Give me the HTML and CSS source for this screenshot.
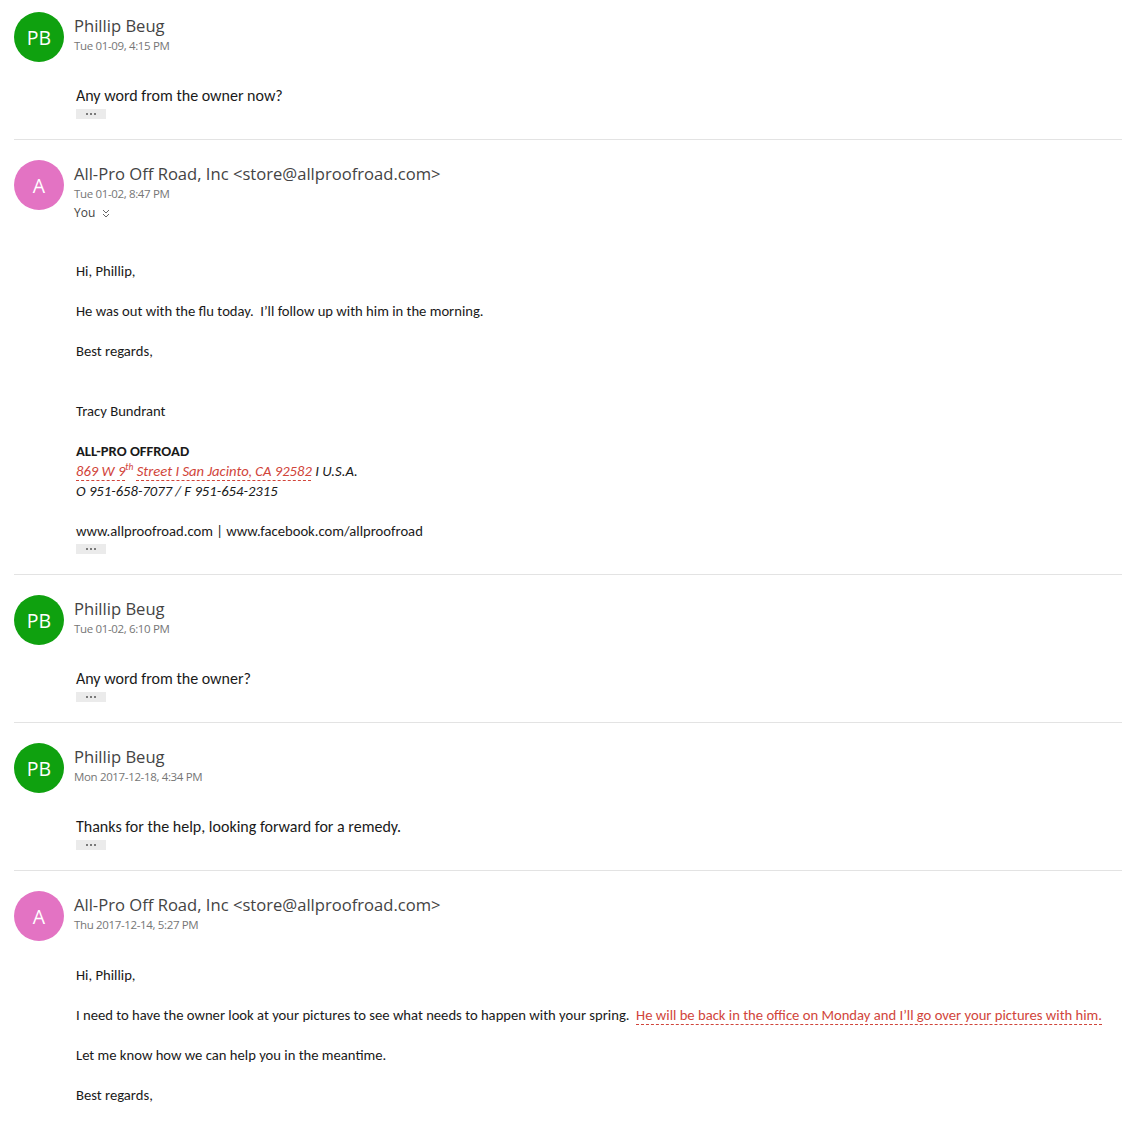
FILE: index.html
```html
<!DOCTYPE html>
<html lang="en">
<head>
<meta charset="utf-8">
<title>Conversation</title>
<link rel="stylesheet" href="styles.css">
</head>
<body>
<div class="thread">

  <div class="msg first">
    <div class="head">
      <div class="avatar green">PB</div>
      <div class="meta">
        <div class="name">Phillip Beug</div>
        <div class="date">Tue 01-09, 4:15 PM</div>
      </div>
    </div>
    <div class="body short">
      <p>Any word from the owner now?</p>
    </div>
    <div class="more"><span></span><span></span><span></span></div>
  </div>

  <div class="msg">
    <div class="head">
      <div class="avatar pink">A</div>
      <div class="meta">
        <div class="name">All-Pro Off Road, Inc &lt;store@allproofroad.com&gt;</div>
        <div class="date">Tue 01-02, 8:47 PM</div>
        <div class="to">You
          <svg class="chev" width="8" height="9" viewBox="0 0 8 9"><polyline points="1,1 4,4 7,1" fill="none" stroke="#666" stroke-width="1"/><polyline points="1,5 4,8 7,5" fill="none" stroke="#666" stroke-width="1"/></svg>
        </div>
      </div>
    </div>
    <div class="body long with-to">
      <p>Hi, Phillip,</p>
      <p class="blank">&nbsp;</p>
      <p>He was out with the flu today.&nbsp; I’ll follow up with him in the morning.</p>
      <p class="blank">&nbsp;</p>
      <p>Best regards,</p>
      <p class="blank">&nbsp;</p>
      <p class="blank">&nbsp;</p>
      <p>Tracy Bundrant</p>
      <p class="blank">&nbsp;</p>
      <p class="bold">ALL-PRO OFFROAD</p>
      <p class="ital"><span class="redlink">869 W 9</span><sup class="red">th</sup> <span class="redlink">Street I San Jacinto, CA 92582</span> I U.S.A.</p>
      <p class="ital">O 951-658-7077 / F 951-654-2315</p>
      <p class="blank">&nbsp;</p>
      <p>www.allproofroad.com | www.facebook.com/allproofroad</p>
    </div>
    <div class="more"><span></span><span></span><span></span></div>
  </div>

  <div class="msg">
    <div class="head">
      <div class="avatar green">PB</div>
      <div class="meta">
        <div class="name">Phillip Beug</div>
        <div class="date">Tue 01-02, 6:10 PM</div>
      </div>
    </div>
    <div class="body short">
      <p>Any word from the owner?</p>
    </div>
    <div class="more"><span></span><span></span><span></span></div>
  </div>

  <div class="msg">
    <div class="head">
      <div class="avatar green">PB</div>
      <div class="meta">
        <div class="name">Phillip Beug</div>
        <div class="date">Mon 2017-12-18, 4:34 PM</div>
      </div>
    </div>
    <div class="body short">
      <p>Thanks for the help, looking forward for a remedy.</p>
    </div>
    <div class="more"><span></span><span></span><span></span></div>
  </div>

  <div class="msg last">
    <div class="head">
      <div class="avatar pink">A</div>
      <div class="meta">
        <div class="name">All-Pro Off Road, Inc &lt;store@allproofroad.com&gt;</div>
        <div class="date">Thu 2017-12-14, 5:27 PM</div>
      </div>
    </div>
    <div class="body long">
      <p>Hi, Phillip,</p>
      <p class="blank">&nbsp;</p>
      <p>I need to have the owner look at your pictures to see what needs to happen with your spring.&nbsp; <span class="redlink">He will be back in the office on Monday and I’ll go over your pictures with him.</span></p>
      <p class="blank">&nbsp;</p>
      <p>Let me know how we can help you in the meantime.</p>
      <p class="blank">&nbsp;</p>
      <p>Best regards,</p>
    </div>
  </div>

</div>
</body>
</html>
```

FILE: styles.css
```css
html, body {
  margin: 0;
  padding: 0;
  background: #ffffff;
}

.thread {
  padding-left: 14px;
}

.msg {
  padding: 20px 0 20px 0;
  border-bottom: 1px solid #e3e3e3;
}

.msg.first {
  padding-top: 12px;
}

.msg.last {
  border-bottom: none;
}

.head {
  display: flex;
  align-items: flex-start;
  gap: 10px;
}

.avatar {
  width: 50px;
  height: 50px;
  border-radius: 50%;
  flex: 0 0 50px;
  display: flex;
  align-items: center;
  justify-content: center;
  color: #ffffff;
  font-family: "Segoe UI", "Open Sans", "Noto Sans", sans-serif;
  font-size: 19.5px;
}

.avatar.green {
  background: #0fa10f;
}

.avatar.pink {
  background: #e373c3;
}

.meta {
  padding-top: 3px;
  font-family: "Segoe UI", "Open Sans", "Noto Sans", sans-serif;
}

.name {
  font-size: 16.6px;
  line-height: 22px;
  color: #444444;
  font-weight: 400;
  letter-spacing: 0;
}

.date {
  font-size: 11.5px;
  line-height: 18px;
  color: #767676;
  letter-spacing: -0.35px;
}

.to {
  font-size: 12px;
  line-height: 20px;
  color: #444444;
  display: flex;
  align-items: center;
  gap: 7px;
}

.chev {
  display: block;
}

.body {
  padding-left: 62px;
  font-family: "Carlito", "Calibri", "Lato", sans-serif;
  color: #1a1a1a;
}

.body p {
  margin: 0;
}

.body.short {
  margin-top: 24px;
  font-size: 16px;
  line-height: 20px;
}

.body.long {
  margin-top: 24px;
  font-size: 14.65px;
  line-height: 20px;
}

.body.long.with-to {
  margin-top: 38px;
}

.bold {
  font-weight: 700;
}

.ital {
  font-style: italic;
}

.redlink {
  color: #d1453b;
  text-decoration: underline dashed #d1453b;
  text-underline-offset: 4px;
  text-decoration-thickness: 1px;
}

.red {
  color: #d1453b;
}

sup {
  font-size: 9.5px;
  line-height: 0;
}

.more {
  margin: 3px 0 0 62px;
  width: 30px;
  height: 10px;
  background: #ebebeb;
  display: flex;
  align-items: center;
  justify-content: center;
  gap: 2px;
}

.more span {
  width: 2px;
  height: 2px;
  border-radius: 50%;
  background: #555555;
}
```
